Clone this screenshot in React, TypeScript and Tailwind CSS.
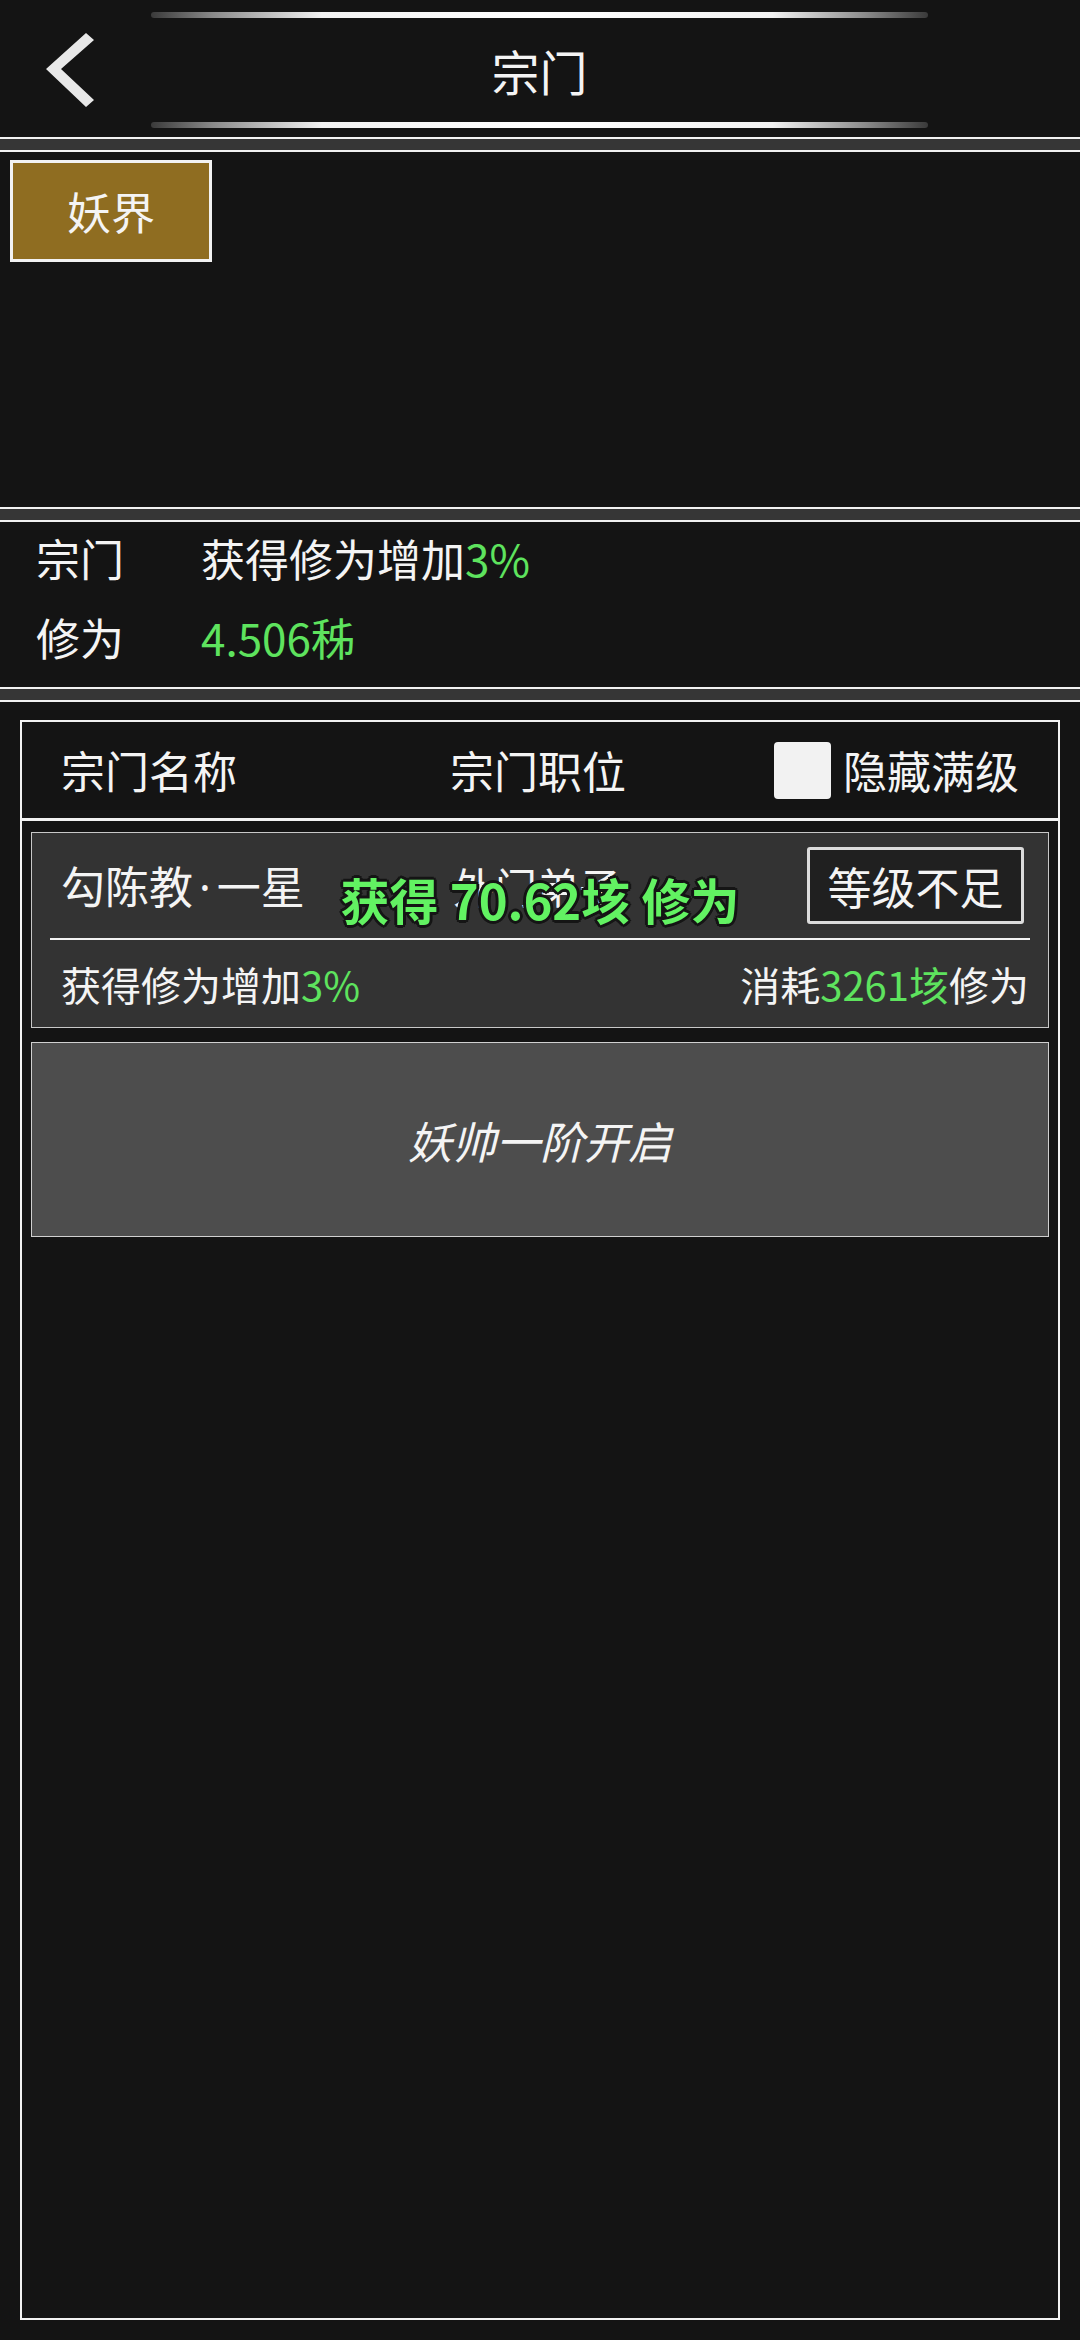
import React from "react";

const Separator = () => (
  <div className="border-y-2 border-[#f2f2f2] h-[15px] bg-[#363636]" />
);

const Bar = () => (
  <div className="h-[6px] rounded-full bg-[linear-gradient(90deg,#3a3a3a_0%,#8a8a8a_8%,#f2f2f2_22%,#ffffff_50%,#f2f2f2_80%,#8a8a8a_92%,#3a3a3a_100%)]" />
);

const Green = ({ children }: { children: React.ReactNode }) => (
  <span className="text-[#5ee35e]">{children}</span>
);

export default function App() {
  return (
    <div className="w-[1080px] h-[2340px] bg-[#141414] text-[#f4f4f4] flex flex-col font-['Noto_Sans_CJK_SC','Noto_Sans',sans-serif] overflow-hidden">
      {/* Top bar */}
      <div className="h-[137px] grid grid-cols-[151px_777px_1fr]">
        <svg width="151" height="137" viewBox="0 0 151 137">
          <polygon points="46,69 86,33 94,40 61,69 94,100 86,107" fill="#e8e8e8" />
        </svg>
        <div className="flex flex-col pt-[12px] pb-[9px]">
          <Bar />
          <div className="flex-1 flex items-center justify-center text-[48px] leading-none">宗门</div>
          <Bar />
        </div>
        <div />
      </div>

      <Separator />

      {/* Realm tabs */}
      <div className="h-[355px] pt-[8px] pl-[10px]">
        <div className="w-[202px] h-[102px] border-[3px] border-[#f2f2f2] bg-[#8f6d21] flex items-center justify-center text-[44px] leading-none">
          妖界
        </div>
      </div>

      <Separator />

      {/* Sect summary */}
      <div className="h-[165px] flex flex-col pt-[14px] gap-[35px] text-[44px] leading-none">
        <div className="flex items-center h-[44px]">
          <span className="w-[201px] pl-[36px]">宗门</span>
          <span>
            获得修为增加<Green>3%</Green>
          </span>
        </div>
        <div className="flex items-center h-[44px]">
          <span className="w-[201px] pl-[36px]">修为</span>
          <Green>4.506秭</Green>
        </div>
      </div>

      <Separator />

      {/* Position list */}
      <div className="flex-1 pt-[18px] px-[20px] pb-[20px] flex">
        <div className="flex-1 border-2 border-[#f2f2f2] flex flex-col">
          <div className="h-[99px] border-b-[3px] border-[#f2f2f2] flex items-center px-[39px] text-[44px] leading-none">
            <span className="w-[389px]">宗门名称</span>
            <span>宗门职位</span>
            <div className="ml-auto flex items-center gap-[12px]">
              <div className="w-[57px] h-[57px] rounded-[4px] bg-[#f2f2f2]" />
              <span>隐藏满级</span>
            </div>
          </div>

          <div className="px-[9px] pt-[11px] flex flex-col gap-[14px]">
            <div className="h-[196px] border border-[#c8c8c8] bg-[#333333] flex flex-col">
              <div className="relative h-[107px] flex items-center mx-[18px] pl-[11px] pr-[6px] border-b-2 border-[#f2f2f2]">
                <span className="w-[392px] text-[44px] leading-none">
                  勾陈教<span className="font-['Noto_Sans',sans-serif] mx-[6px]">·</span>一星
                </span>
                <span className="text-[42px] leading-none">外门弟子</span>
                <div className="ml-auto w-[217px] h-[77px] border-[3px] border-[#dcdcdc] rounded-[3px] bg-[#202020] flex items-center justify-center text-[44px] leading-none">
                  等级不足
                </div>
                <div className="absolute left-1/2 -translate-x-1/2 top-[41px] whitespace-nowrap text-[49px] font-bold leading-none text-[#62f262] [text-shadow:-2px_-2px_0_#151515,2px_-2px_0_#151515,-2px_2px_0_#151515,2px_2px_0_#151515,0_3px_0_#151515,0_-3px_0_#151515,3px_0_0_#151515,-3px_0_0_#151515]">
                  获得 70.62垓 修为
                </div>
              </div>
              <div className="flex-1 flex items-center justify-between pl-[29px] pr-[19px] text-[40px] leading-none">
                <span>
                  获得修为增加<Green>3%</Green>
                </span>
                <span>
                  消耗<Green>3261垓</Green>修为
                </span>
              </div>
            </div>

            <div className="h-[195px] border border-[#d0d0d0] bg-[#4d4d4d] flex items-center justify-center text-[44px] italic leading-none">
              妖帅一阶开启
            </div>
          </div>
        </div>
      </div>
    </div>
  );
}
